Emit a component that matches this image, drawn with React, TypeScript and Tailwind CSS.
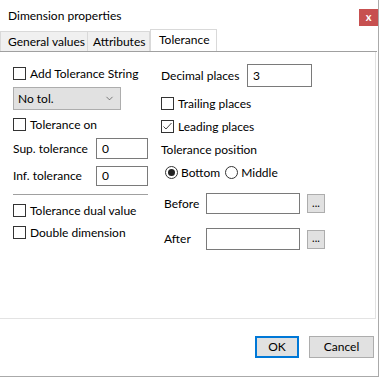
import { ChevronDown } from 'lucide-react';

const font = "font-['Lato','Noto_Sans',sans-serif]";

function Box({ checked = false }: { checked?: boolean }) {
  return (
    <span className="w-[13px] h-[13px] border border-[#333] bg-white flex items-center justify-center shrink-0">
      {checked && (
        <svg width="11" height="11" viewBox="0 0 11 11">
          <path d="M1.5 5.5 L4 8 L9.5 2" fill="none" stroke="#444" strokeWidth="1" />
        </svg>
      )}
    </span>
  );
}

function Check({ label, checked, className = '' }: { label: string; checked?: boolean; className?: string }) {
  return (
    <div className={`flex items-center h-[13px] gap-[4px] whitespace-nowrap ${className}`}>
      <Box checked={checked} />
      <span className="leading-none pt-px">{label}</span>
    </div>
  );
}

function Radio({ label, on }: { label: string; on?: boolean }) {
  return (
    <div className="flex items-center gap-[3px]">
      <span className="w-[13px] h-[13px] rounded-full border border-[#333] bg-white flex items-center justify-center">
        {on && <span className="w-[7px] h-[7px] rounded-full bg-[#222]" />}
      </span>
      <span className="leading-none pt-px">{label}</span>
    </div>
  );
}

function Field({ value = '', className = '' }: { value?: string; className?: string }) {
  return (
    <div className={`border border-[#7a7a7a] bg-white flex items-center pl-[5px] ${className}`}>
      {value}
    </div>
  );
}

function DotsButton() {
  return (
    <div className="w-[18px] h-[19px] ml-[7px] border border-[#adadad] bg-[#e1e1e1] flex items-center justify-center text-[11px] leading-none pb-[3px]">
      ...
    </div>
  );
}

export default function App() {
  return (
    <div className={`w-[380px] h-[377px] bg-white text-[12px] text-black ${font}`}>
      <div className="w-[379px] h-[377px] border-r border-b border-[#aaa] flex flex-col">
        {/* Title bar */}
        <div className="h-[30px] flex justify-between shrink-0">
          <span className="pl-[8px] pt-[8px] leading-[16px]">Dimension properties</span>
          <div className="mt-[9px] w-[19px] h-[17px] bg-[#c75050] text-white font-bold text-[11px] flex items-center justify-center leading-none pb-[2px]">
            x
          </div>
        </div>

        {/* Tabs */}
        <div className="h-[22px] flex items-end shrink-0 border-b border-[#a0a0a0] mr-[1px] whitespace-nowrap">
          <div className="w-[88px] h-[20px] bg-[#f0f0f0] border border-b-0 border-[#d9d9d9] pl-[7px] flex items-center pt-px">General values</div>
          <div className="w-[62px] h-[20px] bg-[#f0f0f0] border border-b-0 border-l-0 border-[#d9d9d9] pl-[5px] flex items-center pt-px">Attributes</div>
          <div className="w-[67px] h-[22px] bg-white border border-b-0 border-[#d9d9d9] pl-[8px] flex items-center pb-[1px]">Tolerance</div>
        </div>

        {/* Panel */}
        <div className="h-[267px] border-b border-r border-[#e3e3e3] mr-[2px] flex shrink-0 whitespace-nowrap">
          {/* Left column */}
          <div className="w-[147px] ml-[13px] flex flex-col">
            <Check label="Add Tolerance String" className="mt-[15px]" />
            <div className="mt-[7px] w-[108px] h-[23px] border border-[#adadad] bg-[#e1e1e1] flex items-center justify-between pl-[4px] pr-[5px]">
              <span>No tol.</span>
              <ChevronDown size={11} strokeWidth={1.3} color="#333" />
            </div>
            <Check label="Tolerance on" className="mt-[8px]" />
            <div className="mt-[7px] flex items-center h-[21px]">
              <span className="w-[83px]">Sup. tolerance</span>
              <Field value="0" className="w-[52px] h-[21px]" />
            </div>
            <div className="mt-[7px] flex items-center h-[20px]">
              <span className="w-[83px]">Inf. tolerance</span>
              <Field value="0" className="w-[52px] h-[20px]" />
            </div>
            <div className="mt-[8px] w-[135px] h-px bg-[#a0a0a0]" />
            <Check label="Tolerance dual value" className="mt-[9px]" />
            <Check label="Double dimension" className="mt-[9px]" />
          </div>

          {/* Right column */}
          <div className="ml-[1px] flex flex-col">
            <div className="mt-[12px] flex items-center h-[23px]">
              <span className="w-[86px]">Decimal places</span>
              <Field value="3" className="w-[65px] h-[23px]" />
            </div>
            <Check label="Trailing places" className="mt-[10px]" />
            <Check label="Leading places" checked className="mt-[10px]" />
            <div className="mt-[9px] h-[16px] flex items-center">Tolerance position</div>
            <div className="mt-[8px] h-[13px] flex items-center gap-[5px] ml-[4px]">
              <Radio label="Bottom" on />
              <Radio label="Middle" />
            </div>
            <div className="mt-[14px] flex items-center h-[21px] ml-[3px]">
              <span className="w-[42px]">Before</span>
              <Field className="w-[94px] h-[21px]" />
              <DotsButton />
            </div>
            <div className="mt-[14px] flex items-center h-[22px] ml-[3px]">
              <span className="w-[42px]">After</span>
              <Field className="w-[94px] h-[22px]" />
              <DotsButton />
            </div>
          </div>
        </div>

        {/* Buttons */}
        <div className="flex justify-end gap-[10px] pr-[4px] mt-[17px]">
          <div className="w-[44px] h-[22px] border-2 border-[#0078d7] bg-[#e1e1e1] flex items-center justify-center">OK</div>
          <div className="w-[65px] h-[22px] border border-[#adadad] bg-[#e1e1e1] flex items-center justify-center">Cancel</div>
        </div>
      </div>
    </div>
  );
}
